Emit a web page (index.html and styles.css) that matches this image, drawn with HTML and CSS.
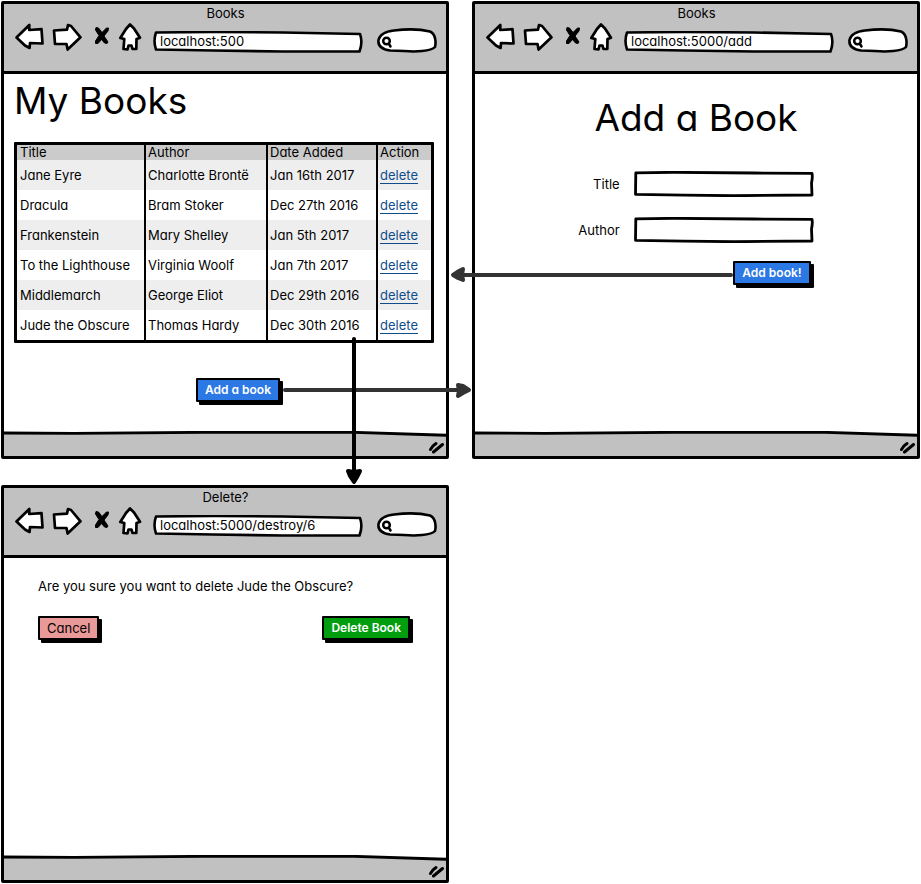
FILE: index.html
```
<!DOCTYPE html>
<html lang="en">
<head>
<meta charset="utf-8">
<title>Books wireframe</title>
<link rel="stylesheet" href="styles.css">
</head>
<body>
<svg class="defs" aria-hidden="true">
  <symbol id="back" viewBox="14 22 31 31"><path class="ink" d="M16.5 37.5 L29.3 25 L29.2 30 L41.5 29.2 L42.5 43.5 L30 43 L29.6 48 L25 45.5 Z"/></symbol>
  <symbol id="forward" viewBox="51 22 33 31"><path class="ink" d="M54 30.5 L67 29.6 L68 25 L71 26 L80.5 37.3 L67.6 49.5 L66.5 44 L55 44 Z"/></symbol>
  <symbol id="stop" viewBox="90 22 22 31"><path class="cross" d="M96 27.500 L98.500 28 L102 32.500 L106.500 28 L108.500 28 L108 31 L104 36 L108 42 L107 43.500 L104.500 43 L101.500 39.500 L98 43.500 L95.500 43.500 L95.500 41 L99 35.500 L95.500 30 Z"/></symbol>
  <symbol id="home" viewBox="118 22 25 31"><path class="ink" d="M130 24.500 L126 29 L120.300 38 L124.300 39 L123.500 49 L127.500 49.300 L128.500 45.500 L131.500 45.500 L132.500 49 L136.300 49 L136.500 39 L140 37.800 L134 28.500 Z"/></symbol>
  <symbol id="urlbar" viewBox="0 0 210 22" preserveAspectRatio="none"><path class="line" d="M3 1.500 L60 1 L130 1.500 L207 3 Q210 11 206.500 20.500 L130 20.500 L60 19.500 L3 18.500 Q0 10 3 1.500 Z"/></symbol>
  <symbol id="pill" viewBox="0 0 60 25" preserveAspectRatio="none"><path class="line" d="M17 2.500 C30 .8 43 1 53 3.500 C59 6 59 15 58 19 C54 23.500 38 24 27 23 L13 22.500 C3 21 1 16 1.500 12 C3 6 8 3.500 17 2.500 Z"/><circle class="glass" cx="9.500" cy="13" r="3.300"/><path class="glass" d="M12 16 L13.500 18.500"/></symbol>
  <symbol id="box" viewBox="0 0 180 26" preserveAspectRatio="none"><path class="box" d="M1.800 1.800 L40 1.300 L120 2 L178 2.300 Q178.800 6 177.500 12 L178 24 L100 24.700 L50 24.200 L1.500 23.300 Z"/></symbol>
  <symbol id="statusbar" viewBox="0 0 442 25" preserveAspectRatio="none"><path class="fill" d="M0 2 L200 1 L350 1 L442 4 V25 H0 Z"/><path class="rule" d="M-2 2 L70 2.300 L200 1.300 L350 1.300 L444 4.300"/></symbol>
  <symbol id="grip" viewBox="0 0 17 14"><path class="grip" d="M2.500 9.500 Q4 6 8 3.500 M5.500 12 Q8 10 14.500 4.500"/></symbol>
</svg>

<main class="board">
  <section class="window">
    <header class="chrome">
      <div class="caption">Books</div>
      <nav class="toolbar">
        <button class="tool back" aria-label="Back"><svg><use href="#back"/></svg></button>
        <button class="tool forward" aria-label="Forward"><svg><use href="#forward"/></svg></button>
        <button class="tool stop" aria-label="Stop"><svg><use href="#stop"/></svg></button>
        <button class="tool home" aria-label="Home"><svg><use href="#home"/></svg></button>
        <div class="url"><svg><use href="#urlbar"/></svg><input type="text" aria-label="Address" value="localhost:500"></div>
        <div class="search"><svg><use href="#pill"/></svg><input type="text" aria-label="Search"></div>
      </nav>
    </header>
    <div class="page list-page">
      <h1>My Books</h1>
      <table>
        <thead><tr><th class="title-col">Title</th><th class="author-col">Author</th><th class="date-col">Date Added</th><th>Action</th></tr></thead>
        <tbody>
          <tr><td>Jane Eyre</td><td>Charlotte Brontë</td><td>Jan 16th 2017</td><td><a href="#delete">delete</a></td></tr>
          <tr><td>Dracula</td><td>Bram Stoker</td><td>Dec 27th 2016</td><td><a href="#delete">delete</a></td></tr>
          <tr><td>Frankenstein</td><td>Mary Shelley</td><td>Jan 5th 2017</td><td><a href="#delete">delete</a></td></tr>
          <tr><td>To the Lighthouse</td><td>Virginia Woolf</td><td>Jan 7th 2017</td><td><a href="#delete">delete</a></td></tr>
          <tr><td>Middlemarch</td><td>George Eliot</td><td>Dec 29th 2016</td><td><a href="#delete">delete</a></td></tr>
          <tr><td>Jude the Obscure</td><td>Thomas Hardy</td><td>Dec 30th 2016</td><td><a href="#delete">delete</a></td></tr>
        </tbody>
      </table>
      <button class="btn primary">Add a book</button>
    </div>
    <footer class="status"><svg class="bar"><use href="#statusbar"/></svg><svg class="corner"><use href="#grip"/></svg></footer>
  </section>

  <section class="window">
    <header class="chrome">
      <div class="caption">Books</div>
      <nav class="toolbar">
        <button class="tool back" aria-label="Back"><svg><use href="#back"/></svg></button>
        <button class="tool forward" aria-label="Forward"><svg><use href="#forward"/></svg></button>
        <button class="tool stop" aria-label="Stop"><svg><use href="#stop"/></svg></button>
        <button class="tool home" aria-label="Home"><svg><use href="#home"/></svg></button>
        <div class="url"><svg><use href="#urlbar"/></svg><input type="text" aria-label="Address" value="localhost:5000/add"></div>
        <div class="search"><svg><use href="#pill"/></svg><input type="text" aria-label="Search"></div>
      </nav>
    </header>
    <div class="page add-page">
      <h1>Add a Book</h1>
      <form>
        <label for="title">Title</label>
        <div class="field"><svg><use href="#box"/></svg><input type="text" id="title"></div>
        <label for="author">Author</label>
        <div class="field"><svg><use href="#box"/></svg><input type="text" id="author"></div>
        <button type="button" class="btn primary">Add book!</button>
      </form>
    </div>
    <footer class="status"><svg class="bar"><use href="#statusbar"/></svg><svg class="corner"><use href="#grip"/></svg></footer>
  </section>

  <section class="window" id="delete">
    <header class="chrome">
      <div class="caption">Delete?</div>
      <nav class="toolbar">
        <button class="tool back" aria-label="Back"><svg><use href="#back"/></svg></button>
        <button class="tool forward" aria-label="Forward"><svg><use href="#forward"/></svg></button>
        <button class="tool stop" aria-label="Stop"><svg><use href="#stop"/></svg></button>
        <button class="tool home" aria-label="Home"><svg><use href="#home"/></svg></button>
        <div class="url"><svg><use href="#urlbar"/></svg><input type="text" aria-label="Address" value="localhost:5000/destroy/6"></div>
        <div class="search"><svg><use href="#pill"/></svg><input type="text" aria-label="Search"></div>
      </nav>
    </header>
    <div class="page delete-page">
      <p>Are you sure you want to delete Jude the Obscure?</p>
      <div class="actions"><button class="btn cancel">Cancel</button><button class="btn confirm">Delete Book</button></div>
    </div>
    <footer class="status"><svg class="bar"><use href="#statusbar"/></svg><svg class="corner"><use href="#grip"/></svg></footer>
  </section>

  <svg class="flows" viewBox="0 0 921 884" preserveAspectRatio="none" aria-hidden="true">
    <g class="flow soft"><path d="M285 390 H462"/><path class="head" d="M458 385 L463 386 L469 390 L463 393 L458 396 L459 391 Z"/></g>
    <g class="flow soft"><path d="M731 275 H460"/><path class="head" d="M463 269 L459 271 L453 275 L458 278 L463 280 L462 275 Z"/></g>
    <g class="flow"><path d="M354 339 V476"/><path class="head" d="M348 471 L350 476 L354 482 L357 477 L360 471 L354 472 Z"/></g>
  </svg>
</main>
</body>
</html>
```
FILE: styles.css
```
* { box-sizing: border-box; }

body {
  margin: 0;
  background: #fff;
  color: #000;
  font: 13px/16px Inter, "Open Sans", sans-serif;
  font-feature-settings: "cv11";
}

input, button {
  font: inherit;
  font-feature-settings: inherit;
  color: inherit;
}

.defs { position: absolute; width: 0; height: 0; }

.board {
  position: relative;
  display: grid;
  grid-template-columns: 1fr 1fr;
  grid-template-rows: minmax(458px, auto) minmax(398px, auto);
  gap: 26px 23px;
  padding: 1px;
}

.window {
  display: flex;
  flex-direction: column;
  border: 3px solid #000;
  border-radius: 2px;
}

.chrome {
  padding: 1px 9px 18px 10px;
  background: #c1c1c1;
  border-bottom: 3px solid #000;
}

.caption { text-align: center; }

.toolbar {
  display: flex;
  align-items: flex-end;
  gap: 6px;
  margin-top: 1px;
}

.tool {
  height: 31px;
  padding: 0;
  border: 0;
  background: none;
}
.tool svg { display: block; width: 100%; height: 100%; }
.back { width: 31px; }
.forward { width: 33px; }
.stop { width: 22px; }
.home { width: 25px; }

.url, .search, .field { position: relative; }
.url { flex: 1; height: 22px; margin: 0 8px 0 4px; }
.search { width: 60px; height: 25px; }
.field { height: 26px; }

.url svg, .search svg, .field svg, .status .bar {
  position: absolute;
  inset: 0;
  width: 100%;
  height: 100%;
}

.url input, .search input, .field input {
  position: relative;
  display: block;
  width: 100%;
  height: 100%;
  padding: 0 7px 3px;
  border: 0;
  outline: 0;
  background: none;
}
.search input { padding-left: 18px; }

.ink, .line, .box { fill: #fff; stroke: #000; stroke-linejoin: round; }
.ink { stroke-width: 2.7; }
.line { stroke-width: 2.6; }
.box { stroke-width: 2.8; }
.cross { fill: #000; stroke: #000; stroke-width: 1; stroke-linejoin: round; }
.glass { fill: none; stroke: #000; stroke-width: 2.5; stroke-linecap: round; }
.fill { fill: #c1c1c1; }
.rule { fill: none; stroke: #000; stroke-width: 2.8; }
.grip { fill: none; stroke: #000; stroke-width: 3; stroke-linecap: round; }

.page { flex: 1; }

h1 {
  margin: 0;
  font-size: 37px;
  line-height: 48px;
  font-weight: 400;
}

.list-page { padding: 3px 12px 0 10px; }

table {
  width: 100%;
  margin: 17px 0 35px;
  table-layout: fixed;
  border: 3px solid #000;
  border-radius: 1px;
  border-spacing: 0;
}
th, td {
  height: 30px;
  padding: 0 2px;
  border-right: 2px solid #000;
  text-align: left;
  font-weight: 400;
  white-space: nowrap;
}
th { height: 15px; line-height: 15px; background: #cbcbcb; }
th:first-child, td:first-child { padding-left: 3px; }
th:last-child, td:last-child { border-right: 0; }
tbody tr:nth-child(odd) { background: #eee; }
.title-col { width: 129px; }
.author-col { width: 122px; }
.date-col { width: 110px; }

a { color: #0f4c8c; text-decoration: none; border-bottom: 1px solid; }

.btn {
  height: 24px;
  padding: 0 7px;
  border: 2px solid #000;
  border-radius: 1px;
  box-shadow: 3px 3px 0 #000;
  line-height: 20px;
  white-space: nowrap;
}
.primary, .confirm { color: #fff; font-size: 12px; font-weight: 600; }
.primary { background: #2c78e4; }
.confirm { background: #009e0f; }
.cancel { background: #ea9999; }
.list-page .btn { display: block; margin-left: 182px; }

.add-page { padding-top: 20px; }
.add-page h1 { text-align: center; }
form {
  display: grid;
  grid-template-columns: auto 180px;
  justify-content: center;
  align-items: center;
  column-gap: 14px;
  margin-top: 29px;
}
form label { text-align: right; }
form .field { margin-bottom: 20px; }
form label { margin-bottom: 20px; }
form .btn { grid-column: 2; justify-self: end; margin: -2px 3px 0 0; }

.delete-page { padding: 20px 36px 0 34px; }
.delete-page p { margin: 0 0 22px; }
.actions { display: flex; justify-content: space-between; }

.status { position: relative; height: 25px; }
.status .corner {
  position: absolute;
  right: 1px;
  bottom: 2px;
  width: 17px;
  height: 14px;
}

.flows {
  position: absolute;
  inset: 0;
  width: 100%;
  height: 100%;
  pointer-events: none;
}
.flow { fill: none; stroke: #000; stroke-width: 4; stroke-linecap: round; stroke-linejoin: round; }
.flow .head { fill: #000; }
.soft { stroke: #333; }
.soft .head { fill: #333; }
```
